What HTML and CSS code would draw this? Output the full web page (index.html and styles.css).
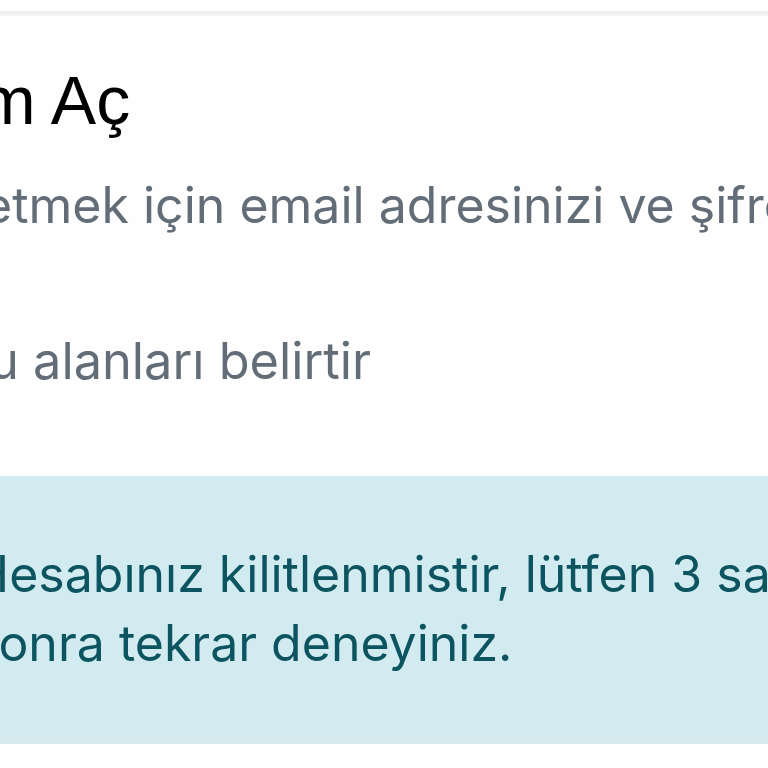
FILE: index.html
```html
<!DOCTYPE html>
<html lang="tr">
<head>
<meta charset="utf-8">
<title>Oturum Aç</title>
<link rel="stylesheet" href="styles.css">
</head>
<body>
<div class="topline"></div>
<main class="card">
  <h1 class="title">Oturum Aç</h1>
  <p class="lead">Devam etmek için email adresinizi ve şifrenizi giriniz.</p>
  <p class="note">Zorunlu alanları belirtir</p>
  <div class="alert">Hesabınız kilitlenmistir, lütfen 3 saat<br>sonra tekrar deneyiniz.</div>
</main>
</body>
</html>
```
FILE: styles.css
```css
html, body {
  margin: 0;
  padding: 0;
  background: #fefefe;
  overflow: hidden;
  width: 768px;
  height: 768px;
}
body {
  font-family: "Inter", "Noto Sans", sans-serif;
  white-space: nowrap;
}
.topline {
  margin-top: 11px;
  height: 5px;
  background: linear-gradient(#efefef, #f1f1f1 70%, #f8f8f8);
}
.card {
  display: flex;
  flex-direction: column;
  align-items: flex-start;
}
.title {
  margin: 44px 0 0 -191px;
  font-family: "Liberation Sans", Arial, sans-serif;
  font-weight: 400;
  font-size: 68px;
  line-height: 80px;
  color: #000;
}
.lead {
  margin: 35px 0 0 -195px;
  font-size: 50px;
  line-height: 60px;
  color: #626d78;
}
.note {
  margin: 96px 0 0 -164px;
  font-size: 50.5px;
  line-height: 60px;
  color: #626d78;
}
.alert {
  align-self: stretch;
  margin: 85px 0 0 -88px;
  padding: 64px 0 58px 60px;
  background: #d2ebf0;
  border-bottom: 8px solid #d5e9ef;
  color: #0c5460;
  font-size: 50px;
  line-height: 69px;
}
```
